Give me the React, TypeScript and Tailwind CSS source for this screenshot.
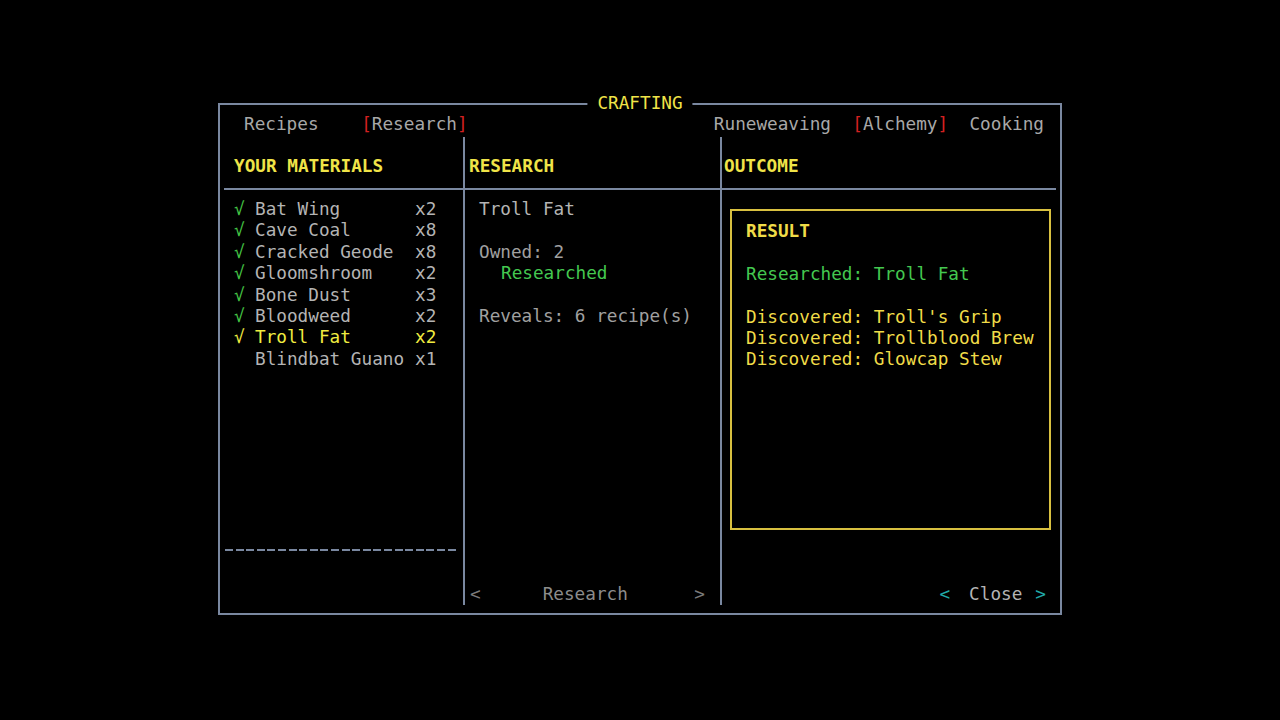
type Material = {
  name: string;
  qty: number;
  known: boolean;
  selected?: boolean;
};

const materials: Array<Material> = [
  { name: 'Bat Wing', qty: 2, known: true },
  { name: 'Cave Coal', qty: 8, known: true },
  { name: 'Cracked Geode', qty: 8, known: true },
  { name: 'Gloomshroom', qty: 2, known: true },
  { name: 'Bone Dust', qty: 3, known: true },
  { name: 'Bloodweed', qty: 2, known: true },
  { name: 'Troll Fat', qty: 2, known: true, selected: true },
  { name: 'Blindbat Guano', qty: 1, known: false },
];

const discovered = ["Troll's Grip", 'Trollblood Brew', 'Glowcap Stew'];

const Blank = () => <div className="h-[21.4px]" />;

const App = () => {
  return (
    <div className="flex h-screen w-full items-center justify-center bg-black font-['DejaVu_Sans_Mono','Liberation_Mono',monospace] text-[17.7px] leading-[21.4px] text-[#b4b4b4]">
      <div className="relative mb-[2px] flex h-[512px] w-[844px] flex-col border-2 border-[#7a88a0]">
        <div className="absolute -top-[12px] left-1/2 -translate-x-1/2 bg-black px-[10px] text-[#f0e448]">
          CRAFTING
        </div>

        {/* tabs */}
        <div className="flex h-[32px] justify-between pl-[24px] pr-[16px] pt-[9px] whitespace-pre text-[#a8a8a8]">
          <div>
            Recipes{'    '}
            <span className="text-[#d42020]">[</span>Research
            <span className="text-[#d42020]">]</span>
          </div>
          <div>
            Runeweaving{'  '}
            <span className="text-[#d42020]">[</span>Alchemy
            <span className="text-[#d42020]">]</span>
            {'  '}Cooking
          </div>
        </div>

        {/* columns */}
        <div className="flex h-[468px] px-[4px]">
          <div className="flex w-[239px] flex-col">
            <div className="h-[53px] border-b-2 border-[#7a88a0] pl-[10px] pt-[19px] font-bold text-[#f0e448]">
              YOUR MATERIALS
            </div>
            <div className="flex-1 pl-[10px] pt-[9px]">
              {materials.map((m) => (
                <div
                  key={m.name}
                  className={m.selected ? 'flex text-[#f0ec40]' : 'flex'}
                >
                  <span
                    className={
                      m.selected
                        ? 'w-[21px] text-[#f0ec40]'
                        : 'w-[21px] text-[#44c444]'
                    }
                  >
                    {m.known ? '√' : ''}
                  </span>
                  <span className="w-[160px] whitespace-pre">{m.name}</span>
                  <span>x{m.qty}</span>
                </div>
              ))}
            </div>
            <div className="ml-[1px] h-[2px] w-[232px] bg-[repeating-linear-gradient(90deg,#7a88a0_0_8px,transparent_8px_10.6px)]" />
            <div className="h-[54px]" />
          </div>

          <div className="flex w-[257px] flex-col border-l-2 border-[#7a88a0]">
            <div className="h-[53px] border-b-2 border-[#7a88a0] pl-[4px] pt-[19px] font-bold text-[#f0e448]">
              RESEARCH
            </div>
            <div className="flex-1 pl-[14px] pt-[9px]">
              <div>Troll Fat</div>
              <Blank />
              <div className="text-[#a0a0a0]">Owned: 2</div>
              <div className="pl-[22px] text-[#44c850]">Researched</div>
              <Blank />
              <div className="text-[#a0a0a0]">Reveals: 6 recipe(s)</div>
            </div>
            <div className="flex pl-[5px] pr-[15px] text-[#7a7a7a]">
              <span>&lt;</span>
              <span className="ml-[62px] text-[#8c8c8c]">Research</span>
              <span className="ml-auto">&gt;</span>
            </div>
          </div>

          <div className="flex flex-1 flex-col border-l-2 border-[#7a88a0]">
            <div className="h-[53px] border-b-2 border-[#7a88a0] pl-[2px] pt-[19px] font-bold text-[#f0e448]">
              OUTCOME
            </div>
            <div className="flex-1 pl-[8px] pr-[5px] pt-[19px]">
              <div className="h-[321px] border-2 border-[#d8c040] pl-[14px] pt-[10px] text-[#f0dc48]">
                <div className="font-bold">RESULT</div>
                <Blank />
                <div className="text-[#44c850]">Researched: Troll Fat</div>
                <Blank />
                {discovered.map((d) => (
                  <div key={d}>Discovered: {d}</div>
                ))}
              </div>
            </div>
            <div className="flex justify-end pr-[10px]">
              <span className="text-[#20a8a8]">&lt;</span>
              <span className="ml-[19px] text-[#b4b4b4]">Close</span>
              <span className="ml-[13px] text-[#20a8a8]">&gt;</span>
            </div>
          </div>
        </div>
      </div>
    </div>
  );
};

export default App;
